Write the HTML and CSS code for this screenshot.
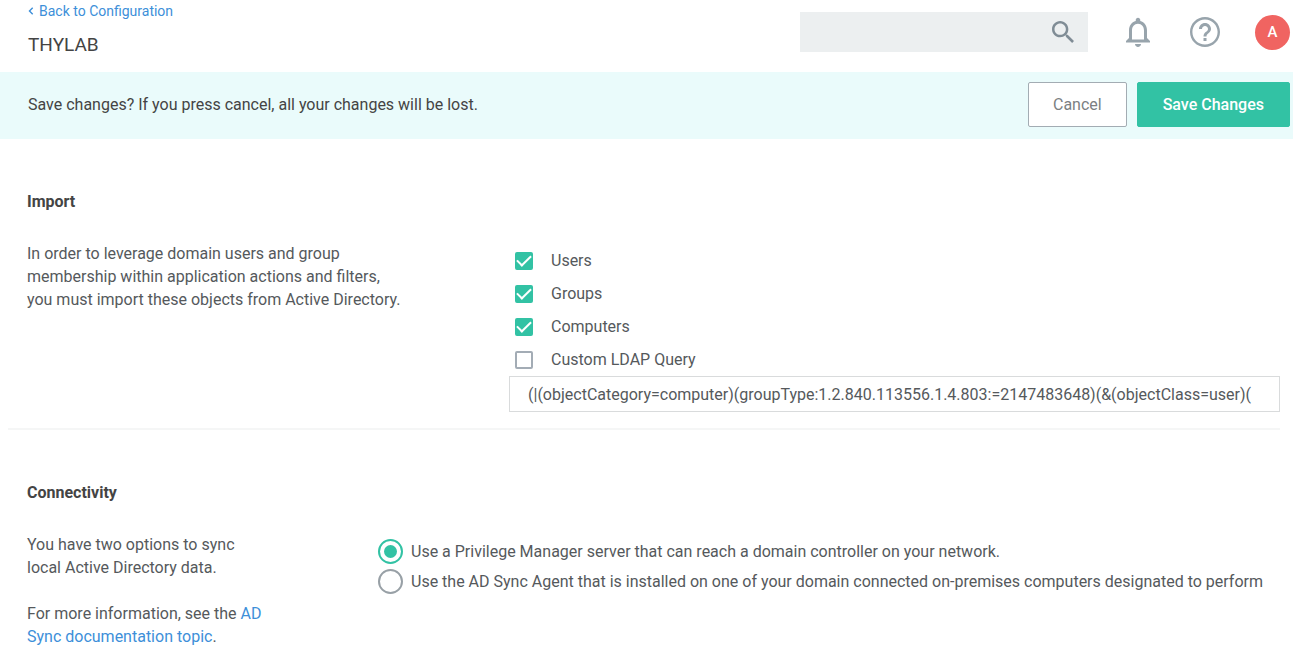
FILE: index.html
```html
<!DOCTYPE html>
<html lang="en">
<head>
<meta charset="utf-8">
<meta name="viewport" content="width=device-width, initial-scale=1">
<title>THYLAB</title>
<link rel="stylesheet" href="styles.css">
</head>
<body>
<header class="topbar">
  <div class="heading">
    <a class="back-link" href="#">
      <svg class="chevron" viewBox="0 0 6 8" aria-hidden="true"><path d="M4.7 .8 1.5 4l3.2 3.2"/></svg>
      Back to Configuration
    </a>
    <h1 class="page-title">THYLAB</h1>
  </div>
  <div class="tools">
    <form class="search" role="search">
      <input class="search-input" type="search" aria-label="Search">
      <button class="icon-button" type="button" aria-label="Search">
        <svg class="icon icon-search" viewBox="3 3 17.5 17.5" aria-hidden="true"><path d="M15.5 14h-.79l-.28-.27C15.41 12.59 16 11.11 16 9.5 16 5.91 13.09 3 9.5 3S3 5.91 3 9.5 5.91 16 9.5 16c1.61 0 3.09-.59 4.23-1.57l.27.28v.79l5 4.99L20.49 19l-4.99-5zm-6 0C7.01 14 5 11.99 5 9.5S7.01 5 9.5 5 14 7.01 14 9.5 11.99 14 9.5 14z"/></svg>
      </button>
    </form>
    <button class="icon-button bell" type="button" aria-label="Notifications">
      <svg class="icon icon-bell" viewBox="4 2 16 20" aria-hidden="true"><path d="M12 22c1.1 0 2-.9 2-2h-4c0 1.1.9 2 2 2zm6-6v-5c0-3.07-1.63-5.64-4.5-6.32V4c0-.83-.67-1.5-1.5-1.5s-1.5.67-1.5 1.5v.68C7.64 5.36 6 7.92 6 11v5l-2 2v1h16v-1l-2-2zm-2 1H8v-6c0-2.48 1.51-4.5 4-4.5s4 2.02 4 4.5v6z"/></svg>
    </button>
    <button class="icon-button help" type="button" aria-label="Help">
      <svg class="icon icon-help" viewBox="2 2 20 20" aria-hidden="true"><path d="M11 18h2v-2h-2v2zm1-16C6.48 2 2 6.48 2 12s4.48 10 10 10 10-4.48 10-10S17.52 2 12 2zm0 18.4c-4.63 0-8.4-3.77-8.4-8.4S7.37 3.6 12 3.6s8.4 3.77 8.4 8.4-3.77 8.4-8.4 8.4zM12 6c-2.21 0-4 1.79-4 4h2c0-1.1.9-2 2-2s2 .9 2 2c0 2-3 1.75-3 5h2c0-2.25 3-2.5 3-5 0-2.21-1.79-4-4-4z"/></svg>
    </button>
    <button class="avatar" type="button" aria-label="Account">A</button>
  </div>
</header>

<div class="save-bar">
  <p class="save-text">Save changes? If you press cancel, all your changes will be lost.</p>
  <button class="button button-cancel" type="button">Cancel</button>
  <button class="button button-save" type="button">Save Changes</button>
</div>

<main class="content">
  <section class="section section-import">
    <h2 class="section-title">Import</h2>
    <p class="description">In order to leverage domain users and group membership within application actions and filters, you must import these objects from Active Directory.</p>
    <div class="fields">
      <label class="check-row"><input class="check" type="checkbox" checked><span>Users</span></label>
      <label class="check-row"><input class="check" type="checkbox" checked><span>Groups</span></label>
      <label class="check-row"><input class="check" type="checkbox" checked><span>Computers</span></label>
      <label class="check-row"><input class="check" type="checkbox"><span>Custom LDAP Query</span></label>
      <input class="query" type="text" aria-label="Custom LDAP Query" value="(|(objectCategory=computer)(groupType:1.2.840.113556.1.4.803:=2147483648)(&amp;(objectClass=user)(">
    </div>
  </section>

  <section class="section section-connectivity">
    <h2 class="section-title">Connectivity</h2>
    <div class="description">
      <p class="paragraph">You have two options to sync local Active Directory data.</p>
      <p class="paragraph">For more information, see the <a class="link" href="#">AD Sync documentation topic</a>.</p>
    </div>
    <div class="options">
      <label class="radio-row"><input class="radio" type="radio" name="sync" checked><span>Use a Privilege Manager server that can reach a domain controller on your network.</span></label>
      <label class="radio-row"><input class="radio" type="radio" name="sync"><span>Use the AD Sync Agent that is installed on one of your domain connected on-premises computers designated to perform</span></label>
    </div>
  </section>
</main>
</body>
</html>
```

FILE: styles.css
```css
* {
  box-sizing: border-box;
}

body {
  margin: 0;
  background: #fff;
  color: #55595c;
  font: 16px/23px Roboto, "Liberation Sans", sans-serif;
}

h1, h2, p {
  margin: 0;
}

button, input {
  font: inherit;
}

a {
  color: #3d8fd9;
  text-decoration: none;
}

.topbar {
  display: flex;
  justify-content: space-between;
  min-height: 72px;
  padding: 0 3px 0 28px;
}

.back-link {
  display: flex;
  align-items: center;
  gap: 5px;
  font-size: 14px;
  line-height: 22px;
}

.chevron {
  width: 6px;
  height: 8px;
  fill: none;
  stroke: currentColor;
  stroke-width: 1.4;
}

.page-title {
  margin-top: 11px;
  color: #444;
  font-size: 19px;
  font-weight: 400;
  line-height: 24px;
}

.tools {
  display: flex;
  align-items: center;
  padding-bottom: 8px;
}

.search {
  display: flex;
  align-items: center;
  width: 288px;
  height: 40px;
  padding-right: 14px;
  background: #eceff0;
}

.search-input {
  flex: 1;
  min-width: 0;
  height: 100%;
  padding: 0 12px;
  border: 0;
  background: transparent;
  outline: none;
}

.icon-button {
  display: flex;
  padding: 0;
  border: 0;
  background: none;
  color: #98a4ac;
}

.icon {
  fill: currentColor;
}

.icon-search {
  width: 22px;
  height: 22px;
  color: #7f8c95;
}

.bell {
  margin-left: 38px;
}

.icon-bell {
  width: 24px;
  height: 30px;
}

.help {
  margin-left: 40px;
}

.icon-help {
  width: 30px;
  height: 30px;
}

.avatar {
  width: 35px;
  height: 35px;
  margin-left: 35px;
  padding: 0;
  border: 0;
  border-radius: 50%;
  background: #f06461;
  color: #fff;
  font-size: 15px;
  font-weight: 500;
}

.save-bar {
  display: flex;
  align-items: center;
  min-height: 67px;
  padding: 0 3px 2px 28px;
  background: #eafbfb;
}

.save-text {
  flex: 1;
  color: #444;
}

.button {
  height: 45px;
  margin-left: 10px;
  padding: 0 24px;
  border: 1px solid #a3acb3;
  border-radius: 2px;
  background: #fff;
  color: #7b7f82;
}

.button-save {
  padding: 0 25px;
  border-color: #32c2a4;
  background: #32c2a4;
  color: #fff;
  font-weight: 500;
}

.content {
  padding: 0 13px 0 8px;
}

.section {
  display: grid;
  padding: 51px 0 16px 19px;
}

.section-import {
  grid-template-columns: 380px 1fr;
  column-gap: 102px;
  border-bottom: 2px solid #f5f6f6;
}

.section-connectivity {
  grid-template-columns: 240px 1fr;
  column-gap: 111px;
}

.section-title {
  grid-column: 1 / -1;
  margin-bottom: 28px;
  color: #444;
  font-size: 16px;
  font-weight: 700;
  line-height: 24px;
}

.paragraph {
  margin-bottom: 23px;
}

.fields {
  display: flex;
  flex-direction: column;
  padding-top: 2px;
  min-width: 0;
}

.check-row {
  display: flex;
  align-items: center;
  gap: 18px;
  height: 33px;
  padding-left: 6px;
}

.check {
  appearance: none;
  flex: none;
  width: 18px;
  height: 18px;
  margin: 0;
  border: 2px solid #a3acb5;
  border-radius: 2px;
  background: #fff;
}

.check:checked {
  display: grid;
  place-items: center;
  border-color: #32c2a4;
  background: #32c2a4;
}

.check:checked::before {
  content: "";
  width: 12px;
  height: 6px;
  margin-bottom: 4px;
  border: solid #fff;
  border-width: 0 0 2px 2px;
  rotate: -45deg;
}

.query {
  width: 100%;
  height: 36px;
  padding: 0 18px;
  border: 1px solid #d9dbdc;
  background: #fff;
  color: #55595c;
}

.options {
  padding-top: 3px;
  min-width: 0;
}

.radio-row {
  display: flex;
  align-items: center;
  gap: 8px;
  min-height: 30px;
  white-space: nowrap;
}

.radio {
  appearance: none;
  display: grid;
  place-items: center;
  flex: none;
  width: 25px;
  height: 25px;
  margin: 0;
  border: 2px solid #98a0a6;
  border-radius: 50%;
}

.radio:checked {
  border-color: #32c2a4;
}

.radio:checked::before {
  content: "";
  width: 13px;
  height: 13px;
  border-radius: 50%;
  background: #32c2a4;
}
```
